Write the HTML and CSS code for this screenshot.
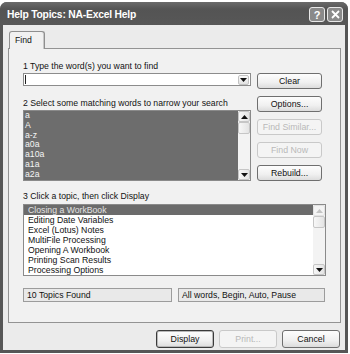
FILE: index.html
```html
<!DOCTYPE html>
<html lang="en">

<head>
    <meta charset="UTF-8">
    <title>Help Topics: NA-Excel Help</title>
    <link rel="stylesheet" href="styles.css">
</head>

<body>
    <div class="window">
        <div class="titlebar">
            <span class="title">Help Topics: NA-Excel Help</span>
            <div class="title-btns">
                <span class="tbtn">?</span>
                <span class="tbtn">
                    <svg width="9" height="9" viewBox="0 0 9 9"><path d="M1 1L8 8M8 1L1 8" stroke="#fff" stroke-width="1.8"/></svg>
                </span>
            </div>
        </div>

        <div class="client">
            <div class="tabs">
                <div class="tab">Find</div>
            </div>

            <div class="pane">
                <div class="top">
                    <div class="left">
                        <div class="label">1 Type the word(s) you want to find</div>
                        <div class="combo">
                            <span class="caret"></span>
                            <span class="drop">
                                <svg width="7" height="4" viewBox="0 0 7 4"><polygon points="0,0 7,0 3.5,4" fill="#111"/></svg>
                            </span>
                        </div>
                        <div class="label gap">2 Select some matching words to narrow your search</div>
                        <div class="list words">
                            <div class="items">
                                <div class="item">a</div>
                                <div class="item">A</div>
                                <div class="item">a-z</div>
                                <div class="item">a0a</div>
                                <div class="item">a10a</div>
                                <div class="item">a1a</div>
                                <div class="item">a2a</div>
                            </div>
                            <div class="sb">
                                <span class="sb-btn"><svg width="7" height="4" viewBox="0 0 7 4"><polygon points="0,4 7,4 3.5,0" fill="#111"/></svg></span>
                                <span class="sb-thumb"></span>
                                <span class="sb-track"></span>
                                <span class="sb-btn"><svg width="7" height="4" viewBox="0 0 7 4"><polygon points="0,0 7,0 3.5,4" fill="#111"/></svg></span>
                            </div>
                        </div>
                    </div>
                    <div class="right">
                        <button class="btn">Clear</button>
                        <button class="btn">Options...</button>
                        <button class="btn" disabled>Find Similar...</button>
                        <button class="btn" disabled>Find Now</button>
                        <button class="btn">Rebuild...</button>
                    </div>
                </div>

                <div class="label gap3">3 Click a topic, then click Display</div>
                <div class="list topics">
                    <div class="items">
                        <div class="item selected">Closing a WorkBook</div>
                        <div class="item">Editing Date Variables</div>
                        <div class="item">Excel (Lotus) Notes</div>
                        <div class="item">MultiFile Processing</div>
                        <div class="item">Opening A Workbook</div>
                        <div class="item">Printing Scan Results</div>
                        <div class="item">Processing Options</div>
                    </div>
                    <div class="sb">
                        <span class="sb-btn off"><svg width="7" height="4" viewBox="0 0 7 4"><polygon points="0,4 7,4 3.5,0" fill="#c4c4c4"/></svg></span>
                        <span class="sb-thumb"></span>
                        <span class="sb-track"></span>
                        <span class="sb-btn"><svg width="7" height="4" viewBox="0 0 7 4"><polygon points="0,0 7,0 3.5,4" fill="#111"/></svg></span>
                    </div>
                </div>

                <div class="status">
                    <div class="field found">10 Topics Found</div>
                    <div class="field mode">All words, Begin, Auto, Pause</div>
                </div>
            </div>

            <div class="actions">
                <button class="btn wide default">Display</button>
                <button class="btn wide" disabled>Print...</button>
                <button class="btn wide">Cancel</button>
            </div>
        </div>
    </div>
</body>

</html>
```

FILE: styles.css
```css
body {
    margin: 0;
    background: #fff;
    font-family: "Liberation Sans", Arial, sans-serif;
    font-size: 8.7px;
    color: #111;
}

.window {
    width: 348px;
    height: 351px;
    margin-top: 2px;
    background: #565656;
    border-radius: 7px 7px 0 0;
    display: flex;
    flex-direction: column;
}

.titlebar {
    height: 23px;
    display: flex;
    align-items: center;
    justify-content: space-between;
    padding: 0 5px 0 7px;
    background: linear-gradient(#6a6a6a, #545454 30%, #575757);
    border-radius: 7px 7px 0 0;
}

.title {
    color: #fff;
    font-weight: bold;
    font-size: 10.3px;
    letter-spacing: -0.2px;
    margin-top: 1px;
}

.title-btns {
    display: flex;
    gap: 2px;
    margin-top: 2px;
}

.tbtn {
    width: 14px;
    height: 13px;
    border: 1px solid #e8e8e8;
    border-radius: 3px;
    background: #8a8a8a;
    color: #fff;
    font-weight: bold;
    font-size: 11px;
    display: flex;
    align-items: center;
    justify-content: center;
}

.client {
    flex: 1;
    margin: 0 3px 3px;
    background: #ebebeb;
    padding: 6px 4px 0 5px;
}

.tabs {
    display: flex;
    height: 17px;
}

.tab {
    position: relative;
    z-index: 1;
    margin-left: 1px;
    width: 29px;
    height: 17px;
    padding-left: 5px;
    border: 1px solid #8f8f8f;
    border-bottom: none;
    border-radius: 3px 3px 0 0;
    background: #f1f1f1;
    line-height: 16px;
    box-shadow: inset -1px 0 #c8c8c8;
}

.pane {
    box-sizing: border-box;
    height: 275px;
    border: 1px solid #939393;
    background: #f1f1f1;
    padding: 12px 14px 0 14px;
}

.top {
    display: grid;
    grid-template-columns: 228px 65px;
    column-gap: 6px;
}

.label {
    height: 11px;
    line-height: 11px;
    white-space: nowrap;
}

.label.gap {
    margin-top: 12px;
}

.label.gap3 {
    margin-top: 10px;
}

.combo {
    box-sizing: border-box;
    height: 13px;
    margin-top: 1px;
    border: 1px solid #8c8c8c;
    background: #fff;
    display: flex;
    align-items: center;
    justify-content: space-between;
    padding: 0 1px 0 1px;
}

.caret {
    width: 1px;
    height: 9px;
    background: #222;
}

.drop {
    box-sizing: border-box;
    width: 11px;
    height: 10px;
    background: linear-gradient(#fafafa, #e2e2e2);
    border: 1px solid #c2c2c2;
    border-radius: 2px;
    display: flex;
    align-items: center;
    justify-content: center;
}

.list {
    box-sizing: border-box;
    display: flex;
    border: 1px solid #8a8a8a;
    overflow: hidden;
}

.list .items {
    flex: 1;
    overflow: hidden;
}

.item {
    height: 10px;
    line-height: 10px;
    white-space: nowrap;
}

.words {
    height: 71px;
    margin-top: 1px;
    background: #6d6d6d;
    color: #f4f4f4;
}

.words .item {
    height: 9.8px;
    line-height: 9.8px;
    padding-left: 1px;
}

.topics {
    height: 72px;
    margin-top: 2px;
    background: #fff;
}

.topics .item {
    padding-left: 4px;
}

.topics .item.selected {
    background: #6b6b6b;
    color: #e2e2e2;
}

.sb {
    width: 12px;
    display: flex;
    flex-direction: column;
    background: #f3f3f3;
}

.sb-btn,
.sb-thumb {
    box-sizing: border-box;
    height: 11px;
    border: 1px solid #c6c6c6;
    border-radius: 2px;
    background: linear-gradient(90deg, #f7f7f7, #e4e4e4);
    display: flex;
    align-items: center;
    justify-content: center;
}

.sb-thumb {
    height: 12px;
}

.sb-btn.off {
    background: #f4f4f4;
    border-color: #e2e2e2;
}

.sb-track {
    flex: 1;
}

.right {
    display: flex;
    flex-direction: column;
    gap: 7px;
    padding-top: 12px;
}

.btn {
    box-sizing: border-box;
    height: 16px;
    padding: 0;
    border: 1px solid #6f6f6f;
    border-radius: 3px;
    background: linear-gradient(#fdfdfd, #f0f0f0 60%, #dcdcdc);
    font-family: inherit;
    font-size: 8.8px;
    color: #111;
}

.btn:disabled {
    border-color: #c9c9c9;
    background: #f4f4f4;
    color: #b9b9b9;
}

.status {
    display: flex;
    gap: 6px;
    margin-top: 12px;
}

.field {
    box-sizing: border-box;
    height: 14px;
    line-height: 12px;
    padding-left: 3px;
    border: 1px solid #9c9c9c;
    background: #e9e9e9;
}

.found {
    width: 149px;
}

.mode {
    width: 147px;
}

.actions {
    display: flex;
    justify-content: flex-end;
    gap: 5px;
    margin-top: 7px;
    padding-right: 1px;
}

.btn.wide {
    width: 58px;
    height: 18px;
}

.btn.default {
    border-color: #3a3a3a;
    box-shadow: inset 0 0 0 1px #b8b8b8;
}
```
